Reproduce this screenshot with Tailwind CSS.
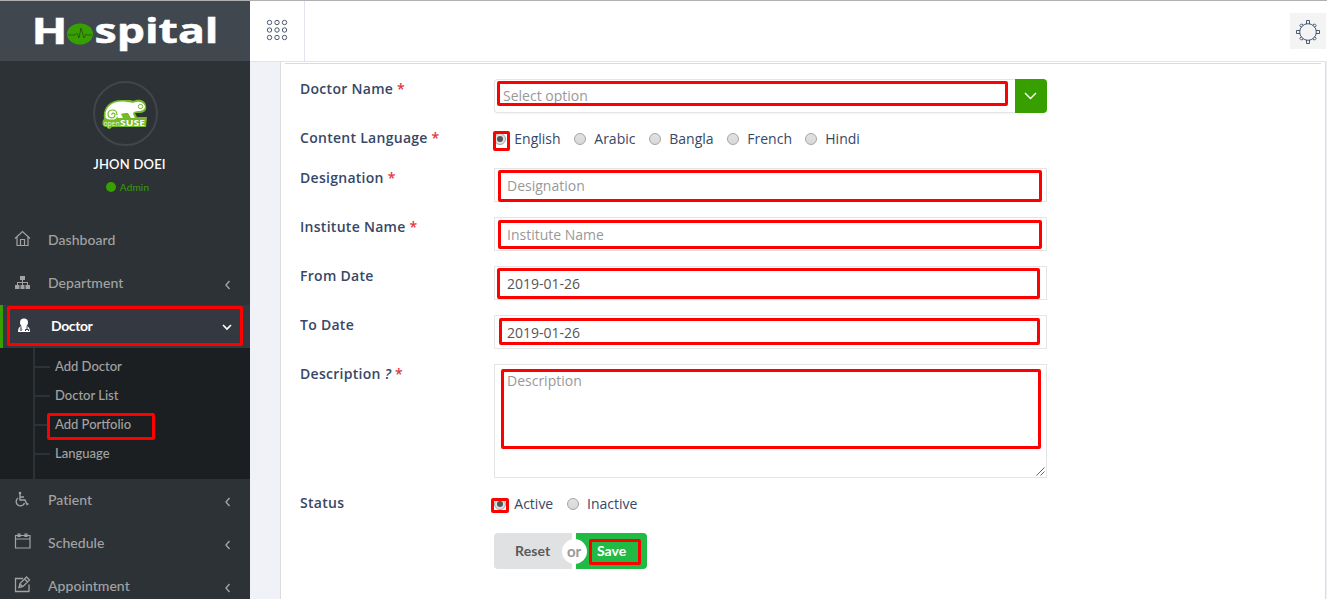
<!DOCTYPE html>
<html lang="en">
<head>
<meta charset="utf-8">
<title>Hospital - Add Portfolio</title>
<script src="https://cdn.jsdelivr.net/npm/@tailwindcss/browser@4"></script>
</head>
<body class="relative h-[599px] w-[1327px] overflow-hidden border-t border-[#b0b0b0] bg-white font-['Open_Sans',sans-serif] text-sm text-[#374767]">
<div class="flex h-full">
  <!-- Sidebar -->
  <aside class="flex w-[250px] shrink-0 flex-col bg-[#2d3236] font-['Lato',sans-serif] text-[#a3a3a3]">
    <a class="block h-[60px] shrink-0 bg-[#40474f]">
      <svg width="250" height="60" viewBox="0 1 250 60" fill="#fff" stroke="#fff" stroke-width=".5" font-family="Open Sans, sans-serif" font-weight="700">
        <text x="31.500" y="43.500" font-size="35.500" textLength="36" lengthAdjust="spacingAndGlyphs">H</text>
        <ellipse cx="80" cy="34" rx="13" ry="10.5" fill="#37a000" stroke="none"/>
        <path d="M68 35h7l2-2 2 5 2-10 3 10 2-4 1.500 1H92" fill="none" stroke="#2c5a1c" stroke-width="1"/>
        <text x="94.500" y="43.300" font-size="34" textLength="124" lengthAdjust="spacingAndGlyphs">spital</text>
      </svg>
    </a>
    <div class="flex h-[158px] shrink-0 flex-col items-center pt-5">
      <div class="flex size-[65px] items-center justify-center rounded-full border-2 border-[#42464b]">
        <svg width="46" height="30" viewBox="0 0 46 30">
          <path d="M2 20C0 8 9 1 19 1h9c3 1 4 1 6 0 6-1 10 2 10 6 1 5-2 7-7 7h-4l2 4h10l-1 10H10c-2 3-5 2-5 0-5 0-5-4-4-7z" fill="#73ba25"/>
          <path d="M3.500 17C3 8 10 2.500 20 2.500c7 0 10 2 12 1 5-2 10-.5 11 4 0 3-3 4.500-6 4.500-4 0-6 1-6 3l2 4h-4l-3-5c-3 0-5 0-7 1l2 4h-5l-1-2c0 3-3 4-6 3.500-4 0-6-1.500-5.500-3.500z" fill="#fff"/>
          <path d="M15 16c0-7-9-6-9-1 0 5 7 5 7 1 0-3-4-2-3 0" fill="none" stroke="#73ba25" stroke-width="1.200"/>
          <circle cx="38.500" cy="7.500" r="2.200" fill="none" stroke="#73ba25"/>
          <text x="1.500" y="27" font-family="Open Sans, sans-serif" font-size="7.500" fill="#e8f5dc" textLength="16" lengthAdjust="spacingAndGlyphs">open</text>
          <text x="18" y="27" font-family="Open Sans, sans-serif" font-weight="700" font-size="9" fill="#fff" textLength="25" lengthAdjust="spacingAndGlyphs">SUSE</text>
        </svg>
      </div>
      <div class="mt-2 pl-[9px] text-[13px] leading-5 font-semibold tracking-[0.2px] text-white">JHON DOEI</div>
      <div class="mt-[5px] flex items-center gap-1 pl-[5px] text-[10px] leading-4 tracking-[0.2px] text-[#37a000]"><span class="size-[10px] rounded-full bg-[#37a000]"></span>Admin</div>
    </div>
    <nav class="text-[14px] font-medium tracking-[0.05px]">
      <a class="flex h-[43px] items-center pr-[19px] pb-[2px] pl-[14px]">
        <svg class="mr-[17px] mb-[2px]" width="17" height="17" viewBox="0 0 17 17" fill="none" stroke="currentColor" stroke-width="1.200"><path d="M1 8.500 8.500 1.500 16 8.500M3 7v8.500h11V7M6.500 15.500V9.500h4v6"/></svg>
        <span>Dashboard</span>
      </a>
      <a class="flex h-[43px] items-center pr-[19px] pb-[2px] pl-[14px]">
        <svg class="mr-[17px]" width="17" height="17" viewBox="0 0 17 17" fill="currentColor"><path d="M6 2h5v4H6zM1 11h4.500v4H1zM6.500 11h4v4h-4zM11.500 11H16v4h-4.500zM8 6h1v5H8zM3 8h11v1H3zM3 8h1v3H3zM13 8h1v3h-1z"/></svg>
        <span>Department</span>
        <svg class="mt-[4px] ml-auto" width="8" height="10" viewBox="0 0 8 10" fill="none" stroke="currentColor" stroke-width="1.400"><path d="M6.500 1 3 5l3.500 4"/></svg>
      </a>
      <a class="flex h-[43px] items-center border-l-[3px] border-[#37a000] bg-[#343840] pr-[18px] pb-[2px] pl-[14px] font-bold tracking-[-0.4px] text-white">
        <svg class="mr-[20px]" width="14" height="15" viewBox="0 0 14 15"><path d="M3 4.500a4 4 0 0 1 8 0c0 2-1 3-1.500 3.500 2.500.5 3.500 2.500 3.500 6H1c0-3.500 1-5.500 3.500-6C4 7.500 3 6.500 3 4.500z" fill="#fff"/><path d="M4 8.500V11M10 8.500V11M8.500 13v-1.500h3V13" fill="none" stroke="#343840"/><circle cx="4" cy="11.800" r=".9" fill="none" stroke="#343840" stroke-width=".7"/></svg>
        <span>Doctor</span>
        <svg class="mt-[2px] ml-auto" width="10" height="8" viewBox="0 0 10 8" fill="none" stroke="currentColor" stroke-width="1.700"><path d="m1 2 4 4 4-4"/></svg>
      </a>
      <div class="h-[131px] bg-[#1c1f22] pl-[33px] text-[13px] font-medium tracking-[0px]">
        <div class="flex h-full flex-col border-l-2 border-[#2d3236] pt-1">
          <a class="flex h-[29px] items-center gap-[5px]"><span class="h-[2px] w-[15px] bg-[#2d3236]"></span>Add Doctor</a>
          <a class="flex h-[29px] items-center gap-[5px]"><span class="h-[2px] w-[15px] bg-[#2d3236]"></span>Doctor List</a>
          <a class="flex h-[29px] items-center gap-[5px]"><span class="h-[2px] w-[15px] bg-[#2d3236]"></span>Add Portfolio</a>
          <a class="flex h-[29px] items-center gap-[5px]"><span class="h-[2px] w-[15px] bg-[#2d3236]"></span>Language</a>
        </div>
      </div>
      <a class="flex h-[43px] items-center pr-[19px] pb-[2px] pl-[14px]">
        <svg class="mr-[17px]" width="17" height="17" viewBox="0 0 17 17" fill="none" stroke="currentColor" stroke-width="1.400"><circle cx="6" cy="2" r="1.300" fill="currentColor" stroke="none"/><path d="M6 3v6h5l2 4.500 1.500-.8M6 6h4M4 7a4.300 4.300 0 1 0 6.500 5"/></svg>
        <span>Patient</span>
        <svg class="mt-[4px] ml-auto" width="8" height="10" viewBox="0 0 8 10" fill="none" stroke="currentColor" stroke-width="1.400"><path d="M6.500 1 3 5l3.500 4"/></svg>
      </a>
      <a class="flex h-[43px] items-center pr-[19px] pb-[2px] pl-[14px]">
        <svg class="mr-[17px] mb-[2px]" width="17" height="17" viewBox="0 0 17 17" fill="none" stroke="currentColor" stroke-width="1.200"><path d="M1.500 2.500h14.500v12.500H1.500zM1.500 6H16M4 1h2v2.500H4zM11 1h2v2.500h-2z"/></svg>
        <span>Schedule</span>
        <svg class="mt-[4px] ml-auto" width="8" height="10" viewBox="0 0 8 10" fill="none" stroke="currentColor" stroke-width="1.400"><path d="M6.500 1 3 5l3.500 4"/></svg>
      </a>
      <a class="flex h-[43px] items-center pr-[19px] pb-[2px] pl-[14px]">
        <svg class="mr-[17px] mb-[2px]" width="17" height="17" viewBox="0 0 17 17" fill="none" stroke="currentColor" stroke-width="1.300"><path d="M9 2.500H1.500v13H15V8.500M5 11.500l1-4 6.500-6.500 3 3L9 10.500zM10.500 3l3 3M6 8l2.500 2.500"/></svg>
        <span>Appointment</span>
        <svg class="mt-[4px] ml-auto" width="8" height="10" viewBox="0 0 8 10" fill="none" stroke="currentColor" stroke-width="1.400"><path d="M6.500 1 3 5l3.500 4"/></svg>
      </a>
    </nav>
  </aside>

  <div class="flex min-w-0 flex-1 flex-col">
    <!-- Top bar -->
    <header class="flex h-[61px] shrink-0 items-stretch justify-between border-b border-[#e1e3ee] bg-white">
      <a class="flex w-[55px] items-center justify-center border-r border-[#e1e3ee]">
        <svg class="mb-[3px]" width="22" height="22" viewBox="0 0 22 22" fill="none" stroke="#4d5671" stroke-width="1"><circle cx="3.500" cy="3.500" r="2.200"/><circle cx="11" cy="3.500" r="2.200"/><circle cx="18.500" cy="3.500" r="2.200"/><circle cx="3.500" cy="11" r="2.200"/><circle cx="11" cy="11" r="2.200"/><circle cx="18.500" cy="11" r="2.200"/><circle cx="3.500" cy="18.500" r="2.200"/><circle cx="11" cy="18.500" r="2.200"/><circle cx="18.500" cy="18.500" r="2.200"/></svg>
      </a>
      <a class="mt-3 mr-px flex size-9 items-center justify-center bg-[#f4f4f4]">
        <svg class="mt-[2px]" width="26" height="26" viewBox="0 0 26 26" fill="none" stroke="#374767" stroke-width=".9"><circle cx="13" cy="13" r="8.300"/><path d="M11.500 5V1.500h3V5M11.500 21v3.500h3V21M5 11.500H1.500v3H5M21 11.500h3.500v3H21"/><g transform="rotate(45 13 13)"><path d="M11.700 5V2.700h2.600V5M11.700 21v2.300h2.600V21M5 11.700H2.700v2.600H5M21 11.700h2.300v2.600H21"/></g></svg>
      </a>
    </header>

    <!-- Form panel -->
    <main class="flex-1 bg-[#f1f2f7] pr-px pl-[30px]">
      <section class="h-full border-x border-[#dcdcdf] bg-white px-1 pt-px">
        <form class="flex flex-col gap-[15px] border-t border-[#dcdcdc] pt-[15px] pl-[15px]">
          <div class="flex"><label class="w-[194px] leading-5 font-semibold tracking-[0.28px]">Doctor Name <span class="text-[#e5343d]">*</span></label>
            <div class="flex h-[34px] w-[553px]">
              <div class="flex-1 rounded-l border border-r-0 border-[#e4e5e7] pl-2 leading-[31px] text-[#999] shadow-xs">Select option</div>
              <div class="flex w-8 items-center justify-center rounded-r bg-[#37a000] pr-[2px]"><svg width="13" height="8" viewBox="0 0 13 8" fill="none" stroke="#fff" stroke-width="1.400"><path d="m1 1 5.500 5.500L12 1"/></svg></div>
            </div></div>
          <div class="flex h-[25px]"><label class="w-[194px] leading-5 font-semibold tracking-[0.28px]">Content Language <span class="text-[#e5343d]">*</span></label>
            <div class="flex h-[23px] items-center leading-[18px]">
              <span class="flex h-[23px] w-[80px] items-center gap-[8.3px] pb-[2px]"><i class="mt-px flex size-3 items-center justify-center rounded-full border border-[#a5a5a5] bg-[#e0e0e0]"><b class="size-[6px] rounded-full bg-[#555]"></b></i>English</span>
              <span class="flex h-[23px] w-[75px] items-center gap-[8.3px] pb-[2px]"><i class="mt-px size-3 rounded-full border border-[#a5a5a5] bg-linear-to-b from-[#e2e2e2] to-[#d8d8d8]"></i>Arabic</span>
              <span class="flex h-[23px] w-[78px] items-center gap-[8.3px] pb-[2px]"><i class="mt-px size-3 rounded-full border border-[#a5a5a5] bg-linear-to-b from-[#e2e2e2] to-[#d8d8d8]"></i>Bangla</span>
              <span class="flex h-[23px] w-[78px] items-center gap-[8.3px] pb-[2px]"><i class="mt-px size-3 rounded-full border border-[#a5a5a5] bg-linear-to-b from-[#e2e2e2] to-[#d8d8d8]"></i>French</span>
              <span class="flex h-[23px] items-center gap-[8.3px] pb-[2px]"><i class="mt-px size-3 rounded-full border border-[#a5a5a5] bg-linear-to-b from-[#e2e2e2] to-[#d8d8d8]"></i>Hindi</span>
            </div></div>
          <div class="flex"><label class="w-[194px] leading-5 font-semibold tracking-[0.28px]">Designation <span class="text-[#e5343d]">*</span></label>
            <div class="h-[34px] w-[553px] border border-[#e4e5e7] pl-3 leading-[34px] text-[#999]">Designation</div></div>
          <div class="flex"><label class="w-[194px] leading-5 font-semibold tracking-[0.28px]">Institute Name <span class="text-[#e5343d]">*</span></label>
            <div class="h-[34px] w-[553px] border border-[#e4e5e7] pl-3 leading-[34px] text-[#999]">Institute Name</div></div>
          <div class="flex"><label class="w-[194px] leading-5 font-semibold tracking-[0.28px]">From Date</label>
            <div class="h-[34px] w-[553px] border border-[#e4e5e7] pl-3 leading-[34px] text-[#555]">2019-01-26</div></div>
          <div class="flex"><label class="w-[194px] leading-5 font-semibold tracking-[0.28px]">To Date</label>
            <div class="h-[34px] w-[553px] border border-[#e4e5e7] pl-3 leading-[34px] text-[#555]">2019-01-26</div></div>
          <div class="flex"><label class="w-[194px] leading-5 font-semibold tracking-[0.28px]">Description <i>?</i> <span class="text-[#e5343d]">*</span></label>
            <div class="flex h-[114px] w-[553px] items-end justify-between border border-[#e4e5e7] pl-3 text-[#999]"><span class="self-start pt-[6px] leading-5">Description</span><svg class="mr-px mb-px" width="9" height="9" viewBox="0 0 9 9" stroke="#555" stroke-width=".9"><path d="M.5 8.500l8-8M4.500 8.500l4-4"/></svg></div></div>
          <div class="flex h-[25px]"><label class="w-[194px] leading-5 font-semibold tracking-[0.28px]">Status</label>
            <div class="flex h-[23px] items-center leading-[18px]">
              <span class="flex h-[23px] w-[73px] items-center gap-[8.3px] pb-[2px]"><i class="mt-px flex size-3 items-center justify-center rounded-full border border-[#a5a5a5] bg-[#e0e0e0]"><b class="size-[6px] rounded-full bg-[#555]"></b></i>Active</span>
              <span class="flex h-[23px] items-center gap-[8px] pb-[2px]"><i class="mt-px size-3 rounded-full border border-[#a5a5a5] bg-linear-to-b from-[#e2e2e2] to-[#d8d8d8]"></i>Inactive</span>
            </div></div>
          <div class="relative ml-[194px] flex h-9 w-[153px] gap-1 font-['Lato',sans-serif] leading-9 font-bold">
            <div class="w-[78px] rounded-l bg-[#e0e1e2] pl-[21px] tracking-[0.1px] text-[#5a5a5a]">Reset</div>
            <div class="flex-1 rounded-r bg-[#21ba45] pl-[21px] text-white">Save</div>
            <div class="absolute top-[6px] left-[68px] flex size-[25px] items-center justify-center rounded-full bg-white pr-px text-[15px] leading-none text-[#999]">or</div>
          </div>
        </form>
      </section>
    </main>
  </div>
</div>

<!-- Highlight boxes drawn over the controls -->
<div class="pointer-events-none absolute inset-x-0 -top-px h-[599px] *:absolute *:rounded-[2px] *:border-3 *:border-[#f00]">
  <i class="top-[306px] left-[7px] h-[40px] w-[236px]"></i>
  <i class="top-[413px] left-[47px] h-[27px] w-[108px]"></i>
  <i class="top-[81px] left-[497px] h-[25px] w-[511px]"></i>
  <i class="top-[131px] left-[493px] h-[20px] w-[17px]"></i>
  <i class="top-[170px] left-[498px] h-[32px] w-[544px]"></i>
  <i class="top-[220px] left-[498px] h-[29px] w-[544px]"></i>
  <i class="top-[268px] left-[497px] h-[31px] w-[543px]"></i>
  <i class="top-[318px] left-[499px] h-[27px] w-[541px]"></i>
  <i class="top-[369px] left-[501px] h-[80px] w-[540px]"></i>
  <i class="top-[498px] left-[491px] h-[15px] w-[18px]"></i>
  <i class="top-[539px] left-[589px] h-[26px] w-[52px]"></i>
</div>
</body>
</html>
